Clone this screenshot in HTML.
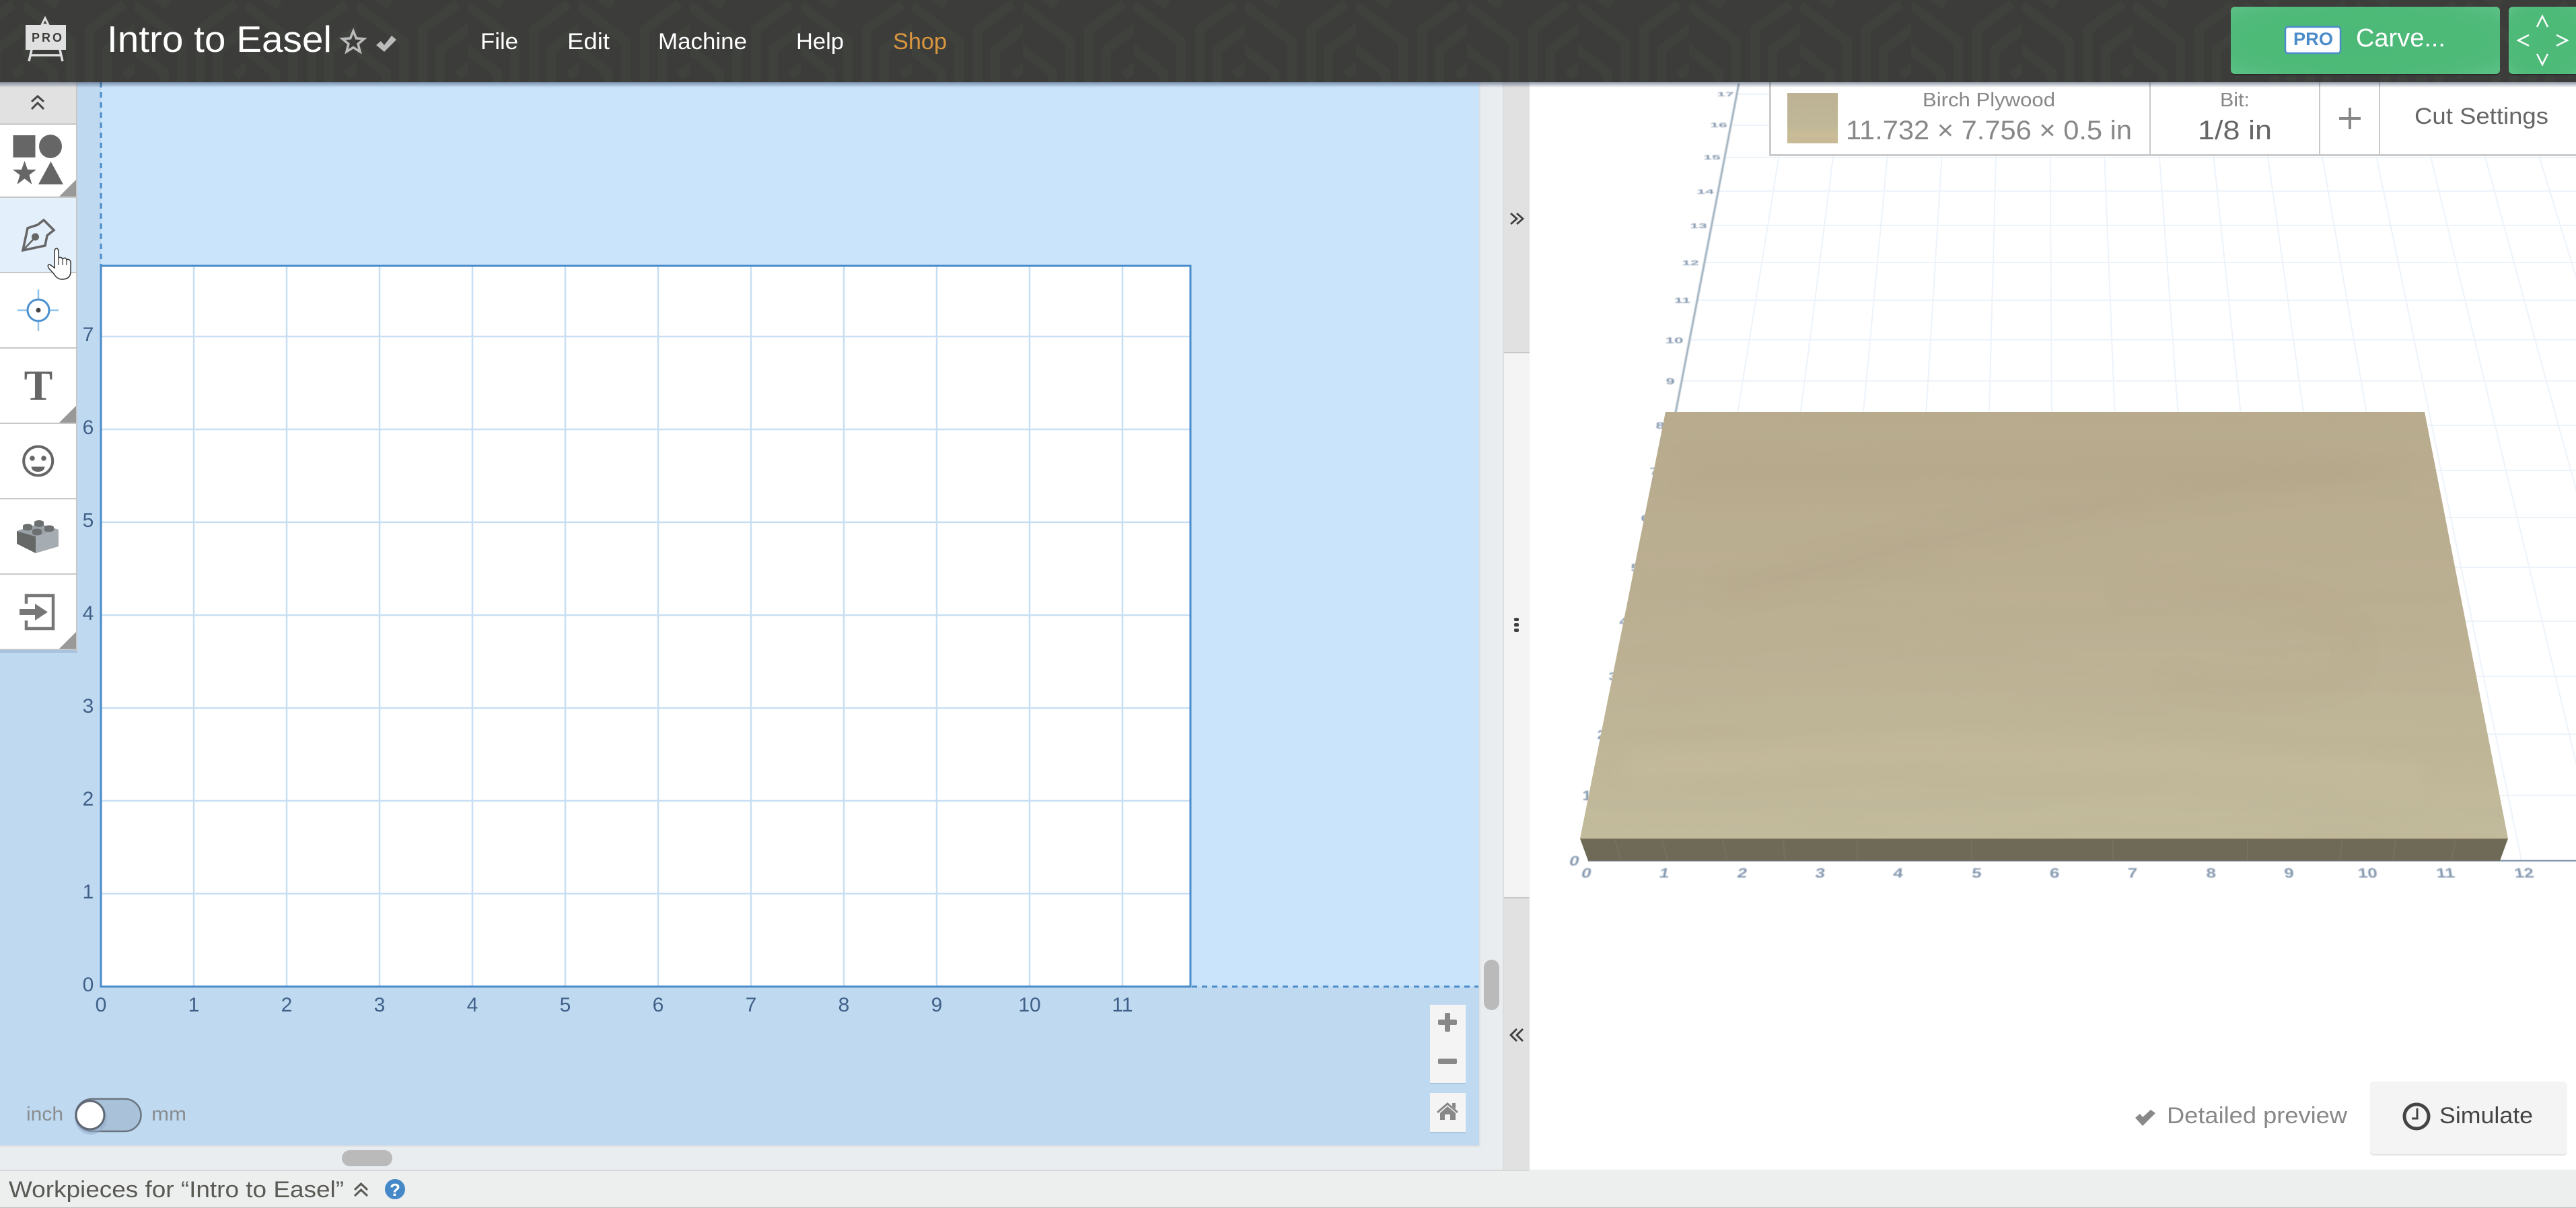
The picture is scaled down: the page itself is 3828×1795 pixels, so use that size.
<!DOCTYPE html>
<html lang="en">
<head>
<meta charset="utf-8">
<title>Intro to Easel</title>
<style>
html,body{margin:0;padding:0;background:#fff;width:3828px;height:1795px;overflow:hidden}
svg{display:block}
text{font-family:"Liberation Sans",sans-serif}
</style>
</head>
<body>
<svg xmlns="http://www.w3.org/2000/svg" width="3828" height="1795" viewBox="0 0 3828 1795">
<defs>
<pattern id="hdr" width="165" height="122" patternUnits="userSpaceOnUse" x="35" y="0">
<rect width="165" height="122" fill="#3c3d3a"/>
<g fill="none" stroke="#3f413d" stroke-width="14">
<path d="M0 8 L70 62 L70 122"/>
<path d="M98 122 L98 44 L150 6"/>
<path d="M-10 66 L44 108 L44 130"/>
<path d="M124 122 L124 74 L172 38"/>
<path d="M30 -6 L50 8"/>
<path d="M150 112 L172 96"/>
</g>
</pattern>
<linearGradient id="shadow" x1="0" y1="0" x2="0" y2="1">
<stop offset="0" stop-color="#33465f" stop-opacity=".55"/>
<stop offset="1" stop-color="#33465f" stop-opacity="0"/>
</linearGradient>
<linearGradient id="woodg" x1="0" y1="0" x2="0" y2="1">
<stop offset="0" stop-color="#b8ab8e"/>
<stop offset=".5" stop-color="#bcb093"/>
<stop offset="1" stop-color="#c2bb9c"/>
</linearGradient>
<radialGradient id="green" cx=".5" cy=".5" r=".75">
<stop offset="0" stop-color="#4cb977"/>
<stop offset=".7" stop-color="#4fba79"/>
<stop offset="1" stop-color="#60c28a"/>
</radialGradient>
<linearGradient id="swatch" x1="0" y1="0" x2="0" y2="1">
<stop offset="0" stop-color="#bdb294"/>
<stop offset=".65" stop-color="#bfb797"/>
<stop offset=".8" stop-color="#c9bc97"/>
<stop offset="1" stop-color="#c7b996"/>
</linearGradient>
<filter id="wood" x="0" y="0" width="100%" height="100%">
<feTurbulence type="fractalNoise" baseFrequency="0.003 0.03" numOctaves="3" seed="4"/>
<feColorMatrix type="matrix" values="0 0 0 0 .45  0 0 0 0 .38  0 0 0 0 .25  1.2 0 0 0 -.45"/>
<feComposite in2="SourceAlpha" operator="in"/>
</filter>
<filter id="soft" x="-10%" y="-10%" width="120%" height="120%"><feGaussianBlur stdDeviation=".8"/></filter>
<filter id="streak" x="-10%" y="-50%" width="120%" height="200%"><feGaussianBlur stdDeviation="14"/></filter>
<clipPath id="boardtop"><polygon points="2475,612 3603,612 3727,1246 2348,1246"/></clipPath>
</defs>

<!-- page bg -->
<rect width="3828" height="1795" fill="#fff"/>

<!-- canvas -->
<rect x="0" y="122" width="2198" height="1580" fill="#bfd9f0"/>
<rect x="150" y="122" width="2048" height="1344" fill="#cae4fb"/>
<rect x="150" y="395" width="1620" height="1071" fill="#fff"/>
<g stroke="#c8dff3" stroke-width="2.5">
<path d="M288 395V1466M426 395V1466M564 395V1466M702 395V1466M840 395V1466M978 395V1466M1116 395V1466M1254 395V1466M1392 395V1466M1530 395V1466M1668 395V1466"/>
<path d="M150 500H1770M150 638H1770M150 776H1770M150 914H1770M150 1052H1770M150 1190H1770M150 1328H1770"/>
</g>
<rect x="150" y="395" width="1619" height="1071" fill="none" stroke="#4a8bc9" stroke-width="3"/>
<path d="M150 122V394" stroke="#4a8bc9" stroke-width="3" stroke-dasharray="8 7" fill="none"/>
<path d="M1771 1466H2197" stroke="#4a8bc9" stroke-width="3" stroke-dasharray="8 7" fill="none"/>

<!-- canvas labels -->
<g font-size="30" fill="#3f6088" text-anchor="middle">
<text x="131" y="507">7</text><text x="131" y="645">6</text><text x="131" y="783">5</text><text x="131" y="921">4</text><text x="131" y="1059">3</text><text x="131" y="1197">2</text><text x="131" y="1335">1</text><text x="131" y="1473">0</text>
<text x="150" y="1503">0</text><text x="288" y="1503">1</text><text x="426" y="1503">2</text><text x="564" y="1503">3</text><text x="702" y="1503">4</text><text x="840" y="1503">5</text><text x="978" y="1503">6</text><text x="1116" y="1503">7</text><text x="1254" y="1503">8</text><text x="1392" y="1503">9</text><text x="1530" y="1503">10</text><text x="1668" y="1503">11</text>
</g>

<!-- zoom controls -->
<rect x="2125" y="1495" width="53" height="116" fill="#a8c5e0"/>
<rect x="2125" y="1493" width="53" height="116" fill="#f4f4f4"/>
<rect x="2137" y="1515" width="28" height="8" rx="2" fill="#888"/>
<rect x="2147" y="1505" width="8" height="28" rx="2" fill="#888"/>
<rect x="2137" y="1573" width="28" height="8" rx="2" fill="#888"/>
<rect x="2125" y="1626" width="53" height="58" fill="#a8c5e0"/>
<rect x="2125" y="1624" width="53" height="58" fill="#f4f4f4"/>
<path d="M2136 1653L2151 1640L2166 1653" fill="none" stroke="#888" stroke-width="3"/>
<path d="M2158 1639h5v9l-5-4z" fill="#888"/>
<path d="M2151 1644L2163 1654V1664H2155V1656H2147V1664H2140V1654Z" fill="#888"/>

<!-- toggle -->
<text x="39" y="1665" font-size="29" fill="#8a8d90" textLength="55" lengthAdjust="spacingAndGlyphs">inch</text>
<text x="225" y="1665" font-size="29" fill="#8a8d90" textLength="52" lengthAdjust="spacingAndGlyphs">mm</text>
<rect x="112.500" y="1633" width="97" height="48" rx="24" fill="#a9c2da" stroke="#6a7480" stroke-width="2.500"/>
<ellipse cx="135" cy="1661" rx="24" ry="25" fill="#8fa9c9" opacity=".5"/>
<circle cx="134" cy="1657" r="21" fill="#fff" stroke="#5f6875" stroke-width="3"/>

<!-- scroll gutters -->
<rect x="0" y="1702" width="2200" height="2" fill="#e0e0e0"/>
<rect x="2198" y="122" width="2" height="1582" fill="#e0e0e0"/>
<rect x="0" y="1704" width="2233" height="34" fill="#e9edf0"/>
<rect x="2200" y="122" width="33" height="1616" fill="#e9edf0"/>
<rect x="508" y="1709" width="75" height="24" rx="12" fill="#bababa"/>
<rect x="2205" y="1426" width="23" height="75" rx="11.500" fill="#bababa"/>

<!-- middle divider panel -->
<rect x="2233" y="122" width="2" height="1618" fill="#dcdcdc"/>
<rect x="2235" y="122" width="38" height="402" fill="#e1e1e1"/>
<rect x="2235" y="524" width="38" height="810" fill="#f4f4f4"/>
<rect x="2235" y="523" width="38" height="2" fill="#c9c9c9"/>
<rect x="2235" y="1334" width="38" height="404" fill="#e1e1e1"/>
<rect x="2235" y="1333" width="38" height="2" fill="#c9c9c9"/>
<g fill="none" stroke="#3f3f3f" stroke-width="2.800">
<path d="M2245 317L2254 325L2245 333M2254 317L2263 325L2254 333"/>
<path d="M2254 1529L2245 1538L2254 1547M2263 1529L2254 1538L2263 1547"/>
</g>
<g fill="#3f3f3f"><rect x="2250" y="918" width="7" height="5" rx="2"/><rect x="2250" y="926" width="7" height="5" rx="2"/><rect x="2250" y="934" width="7" height="5" rx="2"/></g>

<!-- 3D grid -->
<g stroke="#edf3fa" stroke-width="2" fill="none">
<path d="M2581 140H3828M2572 186H3828M2563 234H3828M2554 284H3828M2544 335H3828M2533 390H3828M2522 446H3828M2511 505H3828M2499 566H3828M2487 632H3828M2474 699H3828M2460 769H3828M2446 843H3828M2431 923H3828M2415 1005H3828M2398 1091H3828M2381 1182H3828"/>
<path d="M2661 124L2475 1279M2738 124L2591 1279M2815 124L2706 1279M2892 124L2822 1279M2969 124L2938 1279M3046 124L3053 1279M3123 124L3169 1279M3201 124L3285 1279M3278 124L3400 1279M3355 124L3516 1279M3432 124L3632 1279M3509 124L3747 1279M3586 124L3863 1279M3663 124L3979 1279M3740 124L4094 1279M3817 124L4210 1279"/>
</g>
<path d="M2584 124L2362 1279" stroke="#9fb0be" stroke-width="3" fill="none" filter="url(#soft)"/>
<path d="M2360 1279H3828" stroke="#8a9aad" stroke-width="2.500" fill="none"/>

<!-- 3D labels -->
<g font-size="20" font-weight="bold" fill="#5f7896" text-anchor="middle" filter="url(#soft)" opacity=".75">
<text transform="translate(2564,143) scale(1.15,.42)">17</text>
<text transform="translate(2554,189) scale(1.15,.44)">16</text>
<text transform="translate(2544,237) scale(1.15,.46)">15</text>
<text transform="translate(2534,288) scale(1.15,.48)">14</text>
<text transform="translate(2524,339) scale(1.15,.5)">13</text>
<text transform="translate(2512,394) scale(1.15,.52)">12</text>
<text transform="translate(2500,450) scale(1.15,.55)">11</text>
<text transform="translate(2488,510) scale(1.2,.6)">10</text>
<text transform="translate(2482,571) scale(1.2,.64)">9</text>
<text transform="translate(2467,637) scale(1.2,.68)">8</text>
<text transform="translate(2458,705) scale(1.2,.72)">7</text>
<text transform="translate(2445,775) scale(1.2,.76)">6</text>
<text transform="translate(2430,849) scale(1.2,.8)">5</text>
<text transform="translate(2413,929) scale(1.2,.84)">4</text>
<text transform="translate(2397,1011) scale(1.2,.88)">3</text>
<text transform="translate(2380,1098) scale(1.2,.92)">2</text>
<text transform="translate(2358,1189) scale(1.2,1)">1</text>
<text transform="translate(2338,1286) skewX(-14) scale(1.3,1)">0</text>
<text transform="translate(2356,1304) skewX(-14) scale(1.3,1)">0</text>
<text transform="translate(2472,1304) skewX(-12) scale(1.3,1)">1</text>
<text transform="translate(2588,1304) skewX(-10) scale(1.3,1)">2</text>
<text transform="translate(2704,1304) skewX(-8) scale(1.3,1)">3</text>
<text transform="translate(2820,1304) skewX(-6) scale(1.3,1)">4</text>
<text transform="translate(2937,1304) skewX(-4) scale(1.3,1)">5</text>
<text transform="translate(3053,1304) skewX(-2) scale(1.3,1)">6</text>
<text transform="translate(3169,1304) scale(1.3,1)">7</text>
<text transform="translate(3286,1304) skewX(2) scale(1.3,1)">8</text>
<text transform="translate(3402,1304) skewX(4) scale(1.3,1)">9</text>
<text transform="translate(3519,1304) skewX(6) scale(1.3,1)">10</text>
<text transform="translate(3635,1304) skewX(8) scale(1.3,1)">11</text>
<text transform="translate(3752,1304) skewX(10) scale(1.3,1)">12</text>
</g>

<!-- board -->
<polygon points="2348,1246 3727,1246 3715,1279 2360,1279" fill="#6e6a57"/>
<g stroke="#7a7662" stroke-width="2" opacity=".6" fill="none">
<path d="M2400 1248L2408 1278M2470 1248L2478 1278M2560 1248L2566 1278M2650 1248L2652 1278M2760 1248V1278M2930 1248V1278M3140 1248V1278M3340 1248V1278M3480 1248L3478 1278M3560 1248L3556 1278M3650 1248L3642 1278"/>
</g>
<polygon points="2475,612 3603,612 3727,1246 2348,1246" fill="url(#woodg)"/>
<polygon points="2475,612 3603,612 3727,1246 2348,1246" fill="#000" filter="url(#wood)" opacity=".22"/>
<g clip-path="url(#boardtop)" filter="url(#streak)" fill="none">
<path d="M2560 880Q2800 820 3020 770T3500 700" stroke="#a99c80" stroke-width="30" opacity=".2"/>
<path d="M2500 700H3560" stroke="#ad9f82" stroke-width="34" opacity=".2"/>
<path d="M2420 1140Q2900 1090 3600 1160" stroke="#cabfa0" stroke-width="40" opacity=".35"/>
<path d="M3150 880Q3480 860 3500 960T3220 1010" stroke="#ab9e82" stroke-width="18" opacity=".12"/>
</g>
<rect x="2348" y="1245" width="1379" height="2" fill="#a89a7c"/>

<!-- settings panel -->
<rect x="2630" y="122" width="1198" height="109" fill="#fff"/>
<path d="M2630.500 122V230.500H3828" fill="none" stroke="#cbcbcb" stroke-width="3"/>
<path d="M3195 122V231M3447 122V231M3536 122V231" stroke="#c8c8c8" stroke-width="2"/>
<rect x="2656" y="138" width="75" height="75" fill="url(#swatch)"/>
<text x="2857" y="158" font-size="29" fill="#888" textLength="197" lengthAdjust="spacingAndGlyphs">Birch Plywood</text>
<text x="2743" y="207" font-size="40" fill="#888" textLength="425" lengthAdjust="spacingAndGlyphs">11.732 × 7.756 × 0.5 in</text>
<text x="3299" y="158" font-size="29" fill="#888" textLength="44" lengthAdjust="spacingAndGlyphs">Bit:</text>
<text x="3266" y="207" font-size="40" fill="#666" textLength="110" lengthAdjust="spacingAndGlyphs">1/8 in</text>
<rect x="3476" y="174" width="32" height="4" fill="#888"/>
<rect x="3490" y="160" width="4" height="32" fill="#888"/>
<text x="3588" y="184" font-size="34" fill="#666" textLength="199" lengthAdjust="spacingAndGlyphs">Cut Settings</text>

<!-- bottom right -->
<path d="M3173 1661L3180 1655L3184 1660L3196 1649L3203 1654L3184 1673Z" fill="#888"/>
<text x="3220" y="1669" font-size="34" fill="#888" textLength="268" lengthAdjust="spacingAndGlyphs">Detailed preview</text>
<rect x="3521.500" y="1609" width="293.500" height="108" rx="6" fill="#e4e4e4"/>
<rect x="3521.500" y="1607" width="293.500" height="108" rx="6" fill="#f4f4f4"/>
<circle cx="3591" cy="1659" r="18" fill="none" stroke="#444" stroke-width="5"/>
<path d="M3592 1647V1662H3584" fill="none" stroke="#444" stroke-width="3"/>
<text x="3625" y="1669" font-size="34" fill="#444" textLength="139" lengthAdjust="spacingAndGlyphs">Simulate</text>

<!-- bottom bar -->
<rect x="0" y="1738" width="3828" height="57" fill="#edeeee"/>
<rect x="0" y="1738" width="2273" height="2" fill="#d9d9d9"/>
<rect x="0" y="1794" width="3828" height="1" fill="#bdbdbd"/>
<text x="13" y="1779" font-size="34" fill="#5a5a55" textLength="498" lengthAdjust="spacingAndGlyphs">Workpieces for “Intro to Easel”</text>
<path d="M527 1768L536.500 1759L546 1768M527 1777L536.500 1768L546 1777" fill="none" stroke="#5a5a55" stroke-width="3"/>
<ellipse cx="587" cy="1767" rx="15" ry="15" fill="#4488c8"/>
<text x="587" y="1777" font-size="26" font-weight="bold" fill="#fff" text-anchor="middle">?</text>

<!-- toolbar -->
<rect x="0" y="966" width="115" height="4" fill="#a8c3dd"/>
<rect x="0" y="122" width="113" height="844" fill="#fff"/>
<rect x="0" y="122" width="113" height="61" fill="#e1e1e1"/>
<rect x="0" y="183" width="113" height="3" fill="#cfcfcf"/>
<rect x="0" y="294" width="113" height="110" fill="#e3effb"/>
<g fill="#c8c8c8">
<rect x="113" y="122" width="2" height="846"/>
<rect x="0" y="292" width="113" height="2"/><rect x="0" y="404" width="113" height="2"/><rect x="0" y="516" width="113" height="2"/><rect x="0" y="628" width="113" height="2"/><rect x="0" y="740" width="113" height="2"/><rect x="0" y="852" width="113" height="2"/><rect x="0" y="964" width="115" height="2"/>
</g>
<path d="M47 151L56 143L65 151M47 162L56 153L65 162" fill="none" stroke="#444" stroke-width="3"/>
<g fill="#999"><polygon points="113,267 113,292 88,292"/><polygon points="113,603 113,628 88,628"/><polygon points="113,939 113,964 88,964"/></g>

<!-- shapes icon -->
<g fill="#666">
<rect x="19.500" y="201" width="33" height="33"/>
<ellipse cx="75" cy="217.500" rx="17" ry="17.500"/>
<polygon points="36.500,239 41,252 54,252 43.500,260 47.500,274 36.500,265.500 25.500,274 29.500,260 19,252 32,252"/>
<polygon points="75.500,240 94,274 57,274"/>
</g>

<!-- pen icon -->
<path d="M34 372L41 339L56 334L65 327L80 342L70 350L67 365Z" fill="none" stroke="#666" stroke-width="3.500" stroke-linejoin="miter"/>
<path d="M34 372L52 353" stroke="#666" stroke-width="2.500"/>
<circle cx="52.500" cy="352" r="5.500" fill="#666"/>

<!-- target icon -->
<path d="M57 430V492M26 461H87" stroke="#92c5ee" stroke-width="2.500"/>
<circle cx="57" cy="461" r="16" fill="#fff" stroke="#4a90d0" stroke-width="3"/>
<circle cx="57" cy="461" r="3.500" fill="#444"/>

<!-- T icon -->
<text x="57" y="594" font-size="64" font-weight="bold" fill="#666" text-anchor="middle" style="font-family:'Liberation Serif',serif">T</text>

<!-- face icon -->
<circle cx="56.700" cy="685" r="21.500" fill="none" stroke="#666" stroke-width="4"/>
<circle cx="48" cy="681" r="3.800" fill="#666"/><circle cx="65" cy="681" r="3.800" fill="#666"/>
<path d="M46.500 693.500H66.500Q65.500 701 56.500 701Q47.500 701 46.500 693.500Z" fill="#666"/>

<!-- brick icon -->
<polygon points="25,789 53,797 53,822 25,808" fill="#666868"/>
<polygon points="53,797 87,787 87,812 53,822" fill="#a5adb3"/>
<polygon points="25,789 58,778 87,787 53,797" fill="#9aa2a8"/>
<g fill="#6d7070">
<path d="M34 781.500a7 3 0 0 1 14 0v4a7 3 0 0 1-14 0z"/>
<path d="M51 776a7 3 0 0 1 14 0v4a7 3 0 0 1-14 0z"/>
<path d="M66 783.500a7 3 0 0 1 14 0v4a7 3 0 0 1-14 0z"/>
<path d="M48 788.500a7 3 0 0 1 14 0v4a7 3 0 0 1-14 0z"/>
</g>

<!-- import icon -->
<path d="M39 897V885H79V934H39V922" fill="none" stroke="#777" stroke-width="4.500"/>
<rect x="29" y="905" width="24" height="9" fill="#777"/>
<polygon points="52,897 71,909.500 52,922" fill="#777"/>

<!-- cursor -->
<path d="M81 372Q84 366 87 372L87 383Q91 381 93 385Q97 381 99 386Q103 384 105 389L105 405Q104 415 92 415Q85 415 80 407L72 398Q70 393 74 393L81 398Z" fill="#fff" stroke="#333" stroke-width="1.500"/>
<path d="M87 383V394M93 385V394M99 386V394" stroke="#333" stroke-width="1.200" fill="none"/>

<!-- header -->
<rect x="0" y="122" width="3828" height="8" fill="url(#shadow)"/>
<rect x="0" y="0" width="3828" height="122" fill="url(#hdr)"/>

<!-- logo -->
<polygon points="62,37 67,27 72,37" fill="none" stroke="#e0e0e0" stroke-width="3"/>
<rect x="38" y="37" width="60" height="37" fill="#e0e0e0"/>
<path d="M47 74L43 91M89 74L93 91M45 82H91" stroke="#e0e0e0" stroke-width="3.500" fill="none"/>
<text x="47" y="62" font-size="18" font-weight="bold" fill="#3c3d3a" textLength="45" lengthAdjust="spacing">PRO</text>

<!-- title -->
<text x="159" y="77" font-size="55" fill="#fff" textLength="334" lengthAdjust="spacingAndGlyphs">Intro to Easel</text>
<polygon points="525,46 529.400,56.900 541.200,57.700 532.100,65.300 535,76.800 525,70.500 515,76.800 517.900,65.300 508.800,57.700 520.600,56.900" fill="none" stroke="#bbb" stroke-width="3.500"/>
<path d="M559 67L566 61L571 67L582 53L589 59L571 77Z" fill="#bbb"/>

<!-- nav -->
<g font-size="34" fill="#fff">
<text x="714" y="73" textLength="56" lengthAdjust="spacingAndGlyphs">File</text>
<text x="843" y="73" textLength="63" lengthAdjust="spacingAndGlyphs">Edit</text>
<text x="978" y="73" textLength="132" lengthAdjust="spacingAndGlyphs">Machine</text>
<text x="1183" y="73" textLength="71" lengthAdjust="spacingAndGlyphs">Help</text>
<text x="1327" y="73" fill="#d9963f" textLength="80" lengthAdjust="spacingAndGlyphs">Shop</text>
</g>

<!-- carve -->
<rect x="3315" y="12" width="400" height="100" rx="6" fill="#2c2d2b"/>
<rect x="3315" y="10" width="400" height="100" rx="6" fill="url(#green)"/>
<rect x="3396" y="40" width="82" height="39" rx="4" fill="#fff" stroke="#4a8bc9" stroke-width="2.500"/>
<text x="3408" y="67" font-size="27" font-weight="bold" fill="#4a8bc9" textLength="59" lengthAdjust="spacingAndGlyphs">PRO</text>
<text x="3501" y="69" font-size="38" fill="#fff" textLength="133" lengthAdjust="spacingAndGlyphs">Carve...</text>
<rect x="3728" y="12" width="110" height="100" rx="6" fill="#2c2d2b"/>
<rect x="3728" y="10" width="110" height="100" rx="6" fill="url(#green)"/>
<path d="M3770 40L3778 24L3786 40M3770 80L3778 96L3786 80M3758 52L3742 60L3758 68M3799 52L3815 60L3799 68" fill="none" stroke="#fff" stroke-width="2.500"/>
</svg>
</body>
</html>
